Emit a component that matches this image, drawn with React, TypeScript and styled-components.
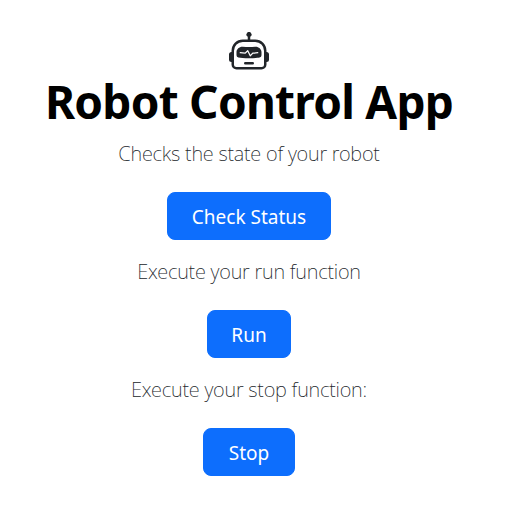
import React from "react";
import styled, { createGlobalStyle } from "styled-components";
import { BsRobot } from "react-icons/bs";

const GlobalStyle = createGlobalStyle`
  *, *::before, *::after { box-sizing: border-box; }
  body {
    margin: 0;
    background: #fff;
    color: #212529;
    font-family: "Noto Sans", "Open Sans", sans-serif;
    font-size: 16px;
  }
`;

const Page = styled.main`
  display: flex;
  flex-direction: column;
  align-items: center;
  width: 498px;
  padding-top: 32px;
`;

const RobotIcon = styled(BsRobot)`
  display: block;
  width: 40px;
  height: 40px;
  color: #212529;
`;

const Title = styled.h1`
  margin: 0 0 9px;
  color: #000;
  font-size: 46px;
  font-weight: 700;
  line-height: 58px;
  white-space: nowrap;
  letter-spacing: -0.75px;
`;

const Section = styled.section`
  display: flex;
  flex-direction: column;
  align-items: center;
  margin-bottom: 16px;
`;

const Lead = styled.p`
  margin: 0 0 23px;
  font-size: 20px;
  font-weight: 200;
  line-height: 30px;
  white-space: nowrap;
  letter-spacing: -0.22px;

  ${Section} + ${Section} > & {
    margin-top: 1px;
  }
`;

const Button = styled.button<{ $width: number }>`
  width: ${(p) => p.$width}px;
  height: 48px;
  padding: 2px 0 0;
  border: 1px solid #0d6efd;
  border-radius: 8px;
  background: #0d6efd;
  color: #fff;
  font: 400 19px/30px "Noto Sans", "Open Sans", sans-serif;
  white-space: nowrap;
`;

const actions = [
  { text: "Checks the state of your robot", label: "Check Status", width: 164 },
  { text: "Execute your run function", label: "Run", width: 84 },
  { text: "Execute your stop function:", label: "Stop", width: 92 },
];

export default function App() {
  return (
    <>
      <GlobalStyle />
      <Page>
        <RobotIcon />
        <Title>Robot Control App</Title>
        {actions.map((a) => (
          <Section key={a.label}>
            <Lead>{a.text}</Lead>
            <Button type="button" $width={a.width}>{a.label}</Button>
          </Section>
        ))}
      </Page>
    </>
  );
}
